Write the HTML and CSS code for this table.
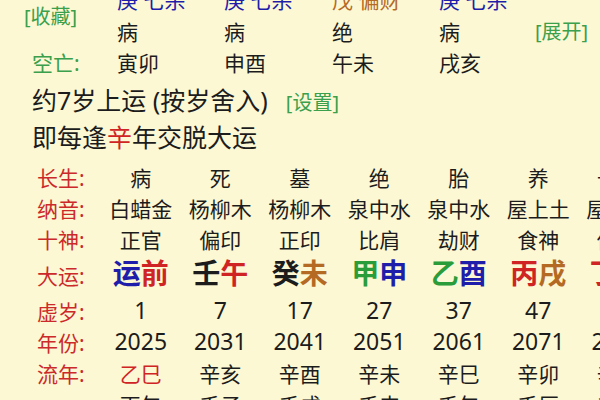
FILE: index.html
```html
<!DOCTYPE html>
<html lang="zh">
<head>
<meta charset="utf-8">
<link rel="stylesheet" href="styles.css">
</head>
<body>
<div class="page">
  <div class="pillars">
    <div class="lbl-link">[收藏]</div>
    <div class="blue">庚 七杀</div>
    <div class="blue">庚 七杀</div>
    <div class="brown">戊 偏财</div>
    <div class="blue">庚 七杀</div>
    <div></div>
    <div>病</div>
    <div>病</div>
    <div>绝</div>
    <div>病</div>
    <div class="link">[展开]</div>
    <div class="lbl-green">空亡:</div>
    <div>寅卯</div>
    <div>申酉</div>
    <div>午未</div>
    <div>戌亥</div>
    <div></div>
  </div>

  <div class="info">
    <div>约7岁上运 (按岁舍入)<span class="link setting">[设置]</span></div>
    <div>即每逢<span class="red">辛</span>年交脱大运</div>
  </div>

  <div class="table">
    <div class="lbl">长生:</div>
    <div>病</div><div>死</div><div>墓</div><div>绝</div><div>胎</div><div>养</div><div>长生</div>

    <div class="lbl">纳音:</div>
    <div>白蜡金</div><div>杨柳木</div><div>杨柳木</div><div>泉中水</div><div>泉中水</div><div>屋上土</div><div>屋上土</div>

    <div class="lbl">十神:</div>
    <div>正官</div><div>偏印</div><div>正印</div><div>比肩</div><div>劫财</div><div>食神</div><div>伤官</div>

    <div class="lbl">大运:</div>
    <div class="dy"><span class="blue">运</span><span class="red">前</span></div>
    <div class="dy"><span>壬</span><span class="red">午</span></div>
    <div class="dy"><span>癸</span><span class="brown">未</span></div>
    <div class="dy"><span class="green">甲</span><span class="blue">申</span></div>
    <div class="dy"><span class="green">乙</span><span class="blue">酉</span></div>
    <div class="dy"><span class="red">丙</span><span class="brown">戌</span></div>
    <div class="dy"><span class="red">丁</span><span class="blue">亥</span></div>

    <div class="lbl">虚岁:</div>
    <div class="num">1</div><div class="num">7</div><div class="num">17</div><div class="num">27</div><div class="num">37</div><div class="num">47</div><div class="num">57</div>

    <div class="lbl">年份:</div>
    <div class="num">2025</div><div class="num">2031</div><div class="num">2041</div><div class="num">2051</div><div class="num">2061</div><div class="num">2071</div><div class="num">2081</div>

    <div class="lbl">流年:</div>
    <div class="red">乙巳</div><div>辛亥</div><div>辛酉</div><div>辛未</div><div>辛巳</div><div>辛卯</div><div>辛丑</div>

    <div class="lbl"></div>
    <div>丙午</div><div>壬子</div><div>壬戌</div><div>壬申</div><div>壬午</div><div>壬辰</div><div>壬寅</div>
  </div>
</div>
</body>
</html>
```
FILE: styles.css
```css
html, body {
  margin: 0;
  padding: 0;
}
body {
  width: 600px;
  height: 400px;
  overflow: hidden;
  background: #fcf8d4;
  color: #1c1c1c;
  font-family: "Noto Sans", "Noto Sans CJK SC", sans-serif;
}
.page {
  width: 600px;
  height: 400px;
  overflow: hidden;
}
.blue { color: #1e1eaa; }
.brown { color: #b56a24; }
.red { color: #d02424; }
.green { color: #2a9c3a; }

.pillars {
  display: grid;
  grid-template-columns: 117px 107px 108px 107px 96px 1fr;
  grid-auto-rows: 31.5px;
  align-items: center;
  margin-top: -15px;
  font-size: 21px;
  line-height: 1;
  white-space: nowrap;
}
.lbl-link {
  grid-row: span 2;
  padding-left: 24px;
  color: #3aa04c;
  font-size: 20px;
}
.lbl-green {
  padding-left: 32px;
  color: #3aa04c;
}
.link {
  color: #3aa04c;
  font-size: 20px;
}

.info {
  margin-top: 3px;
  padding-left: 32px;
  font-size: 25px;
  line-height: 34px;
  white-space: nowrap;
}
.setting {
  margin-left: 18px;
}

.table {
  display: grid;
  grid-template-columns: 101px repeat(7, 79.5px);
  grid-template-rows: 31px 31px 31px 41px 31px 31px 31px 31px;
  align-items: center;
  margin-top: 9px;
  font-size: 21px;
  line-height: 1;
  white-space: nowrap;
  text-align: center;
}
.table .lbl {
  text-align: left;
  padding-left: 37px;
  color: #cc2a2a;
}
.table .num {
  font-size: 23px;
  padding-bottom: 3px;
}
.table .dy {
  font-size: 28px;
  font-weight: bold;
  padding-bottom: 6px;
}
```
